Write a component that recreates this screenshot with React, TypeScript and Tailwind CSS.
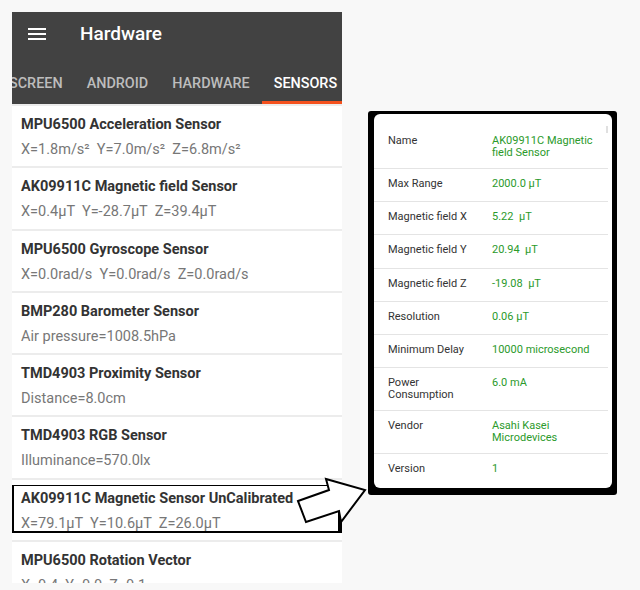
import React from 'react';

const sensors = [
  { name: 'MPU6500 Acceleration Sensor', value: 'X=1.8m/s²  Y=7.0m/s²  Z=6.8m/s²' },
  { name: 'AK09911C Magnetic field Sensor', value: 'X=0.4μT  Y=-28.7μT  Z=39.4μT' },
  { name: 'MPU6500 Gyroscope Sensor', value: 'X=0.0rad/s  Y=0.0rad/s  Z=0.0rad/s' },
  { name: 'BMP280 Barometer Sensor', value: 'Air pressure=1008.5hPa' },
  { name: 'TMD4903 Proximity Sensor', value: 'Distance=8.0cm' },
  { name: 'TMD4903 RGB Sensor', value: 'Illuminance=570.0lx' },
  { name: 'AK09911C Magnetic Sensor UnCalibrated', value: 'X=79.1μT  Y=10.6μT  Z=26.0μT', marked: true },
  { name: 'MPU6500 Rotation Vector', value: 'X=0.4  Y=0.0  Z=0.1' },
];

const details = [
  { label: 'Name', value: 'AK09911C Magnetic field Sensor' },
  { label: 'Max Range', value: '2000.0 μT' },
  { label: 'Magnetic field X', value: '5.22  μT' },
  { label: 'Magnetic field Y', value: '20.94  μT' },
  { label: 'Magnetic field Z', value: '-19.08  μT' },
  { label: 'Resolution', value: '0.06 μT' },
  { label: 'Minimum Delay', value: '10000 microsecond' },
  { label: 'Power Consumption', value: '6.0 mA' },
  { label: 'Vendor', value: 'Asahi Kasei Microdevices' },
  { label: 'Version', value: '1' },
];

const tabs = ['SCREEN', 'ANDROID', 'HARDWARE', 'SENSORS'];

const App = () => {
  return (
    <div className="relative h-[590px] w-[640px] overflow-hidden bg-[#f8f8f8] font-['Roboto',sans-serif]">
      <div className="flex items-start pl-[12px] pt-[12px]">
        {/* phone screenshot */}
        <div className="relative h-[571px] w-[330px] shrink-0 overflow-hidden bg-[#ececec]">
          <div className="bg-[#424242]">
            <div className="flex h-[44px] items-center">
              <div className="ml-[16px] flex w-[18px] flex-col gap-[3px]">
                <span className="h-[2px] bg-white" />
                <span className="h-[2px] bg-white" />
                <span className="h-[2px] bg-white" />
              </div>
              <span className="ml-[34px] pt-[1px] text-[19px] font-medium text-white">Hardware</span>
            </div>
            <div className="flex h-[48px] whitespace-nowrap">
              {tabs.map((tab, i) => (
                <div
                  key={tab}
                  className={
                    'flex shrink-0 items-center px-[12px] pt-[10px] text-[14.4px] font-medium ' +
                    (i === 0 ? '-ml-[15px] ' : '') +
                    (tab === 'SENSORS'
                      ? 'border-b-[3px] border-[#f4511e] text-white'
                      : 'border-b-[3px] border-transparent text-[#bdbdbd]')
                  }
                >
                  {tab}
                </div>
              ))}
            </div>
          </div>

          <div className="flex flex-col gap-[2px] pt-[2px]">
            {sensors.map((s) => (
              <div key={s.name} className="relative h-[60.3px] shrink-0 bg-white px-[9px]">
                <div className="pt-[10px] text-[14.5px] font-bold leading-[18px] text-[#333]">{s.name}</div>
                <div className="pt-[7px] text-[14.5px] leading-[18px] whitespace-pre text-[#777]">{s.value}</div>
                {s.marked && (
                  <div className="absolute left-0 right-0 top-[5px] bottom-[7px] border-t border-l-2 border-b-2 border-r-[4px] border-black" />
                )}
              </div>
            ))}
          </div>
        </div>

        {/* sensor detail dialog, framed */}
        <div className="ml-[26px] mt-[99px] h-[384px] w-[249px] shrink-0 rounded-[3px] bg-black pt-[3px] pl-[6px] pr-[5px] pb-[7px]">
          <div className="relative h-full rounded-[6px] bg-white pt-[12px] pr-[4px]">
            <span className="absolute right-[4px] top-[12px] h-[7px] w-[2px] bg-[#e0e0e0]" />
            {details.map((d, i) => (
              <div
                key={d.label}
                className={
                  'flex min-h-[33.2px] items-start py-[9px] pl-[14px] text-[11px] leading-[12px] ' +
                  (i < details.length - 1 ? 'border-b border-[#e4e4e4]' : '')
                }
              >
                <span className="w-[88px] shrink-0 text-[#333]">{d.label}</span>
                <span className="ml-[16px] w-[108px] whitespace-pre-wrap text-[#2b9a2b]">{d.value}</span>
              </div>
            ))}
          </div>
        </div>
      </div>

      {/* hand-drawn arrow pointing to the dialog */}
      <svg className="pointer-events-none absolute left-0 top-0" width="640" height="590" viewBox="0 0 640 590">
        <polygon
          points="298,501 329,490 326,479 365,490 341,522 339,511 306,522"
          fill="white"
          stroke="black"
          strokeWidth="2"
          strokeLinejoin="miter"
        />
      </svg>
    </div>
  );
};

export default App;
